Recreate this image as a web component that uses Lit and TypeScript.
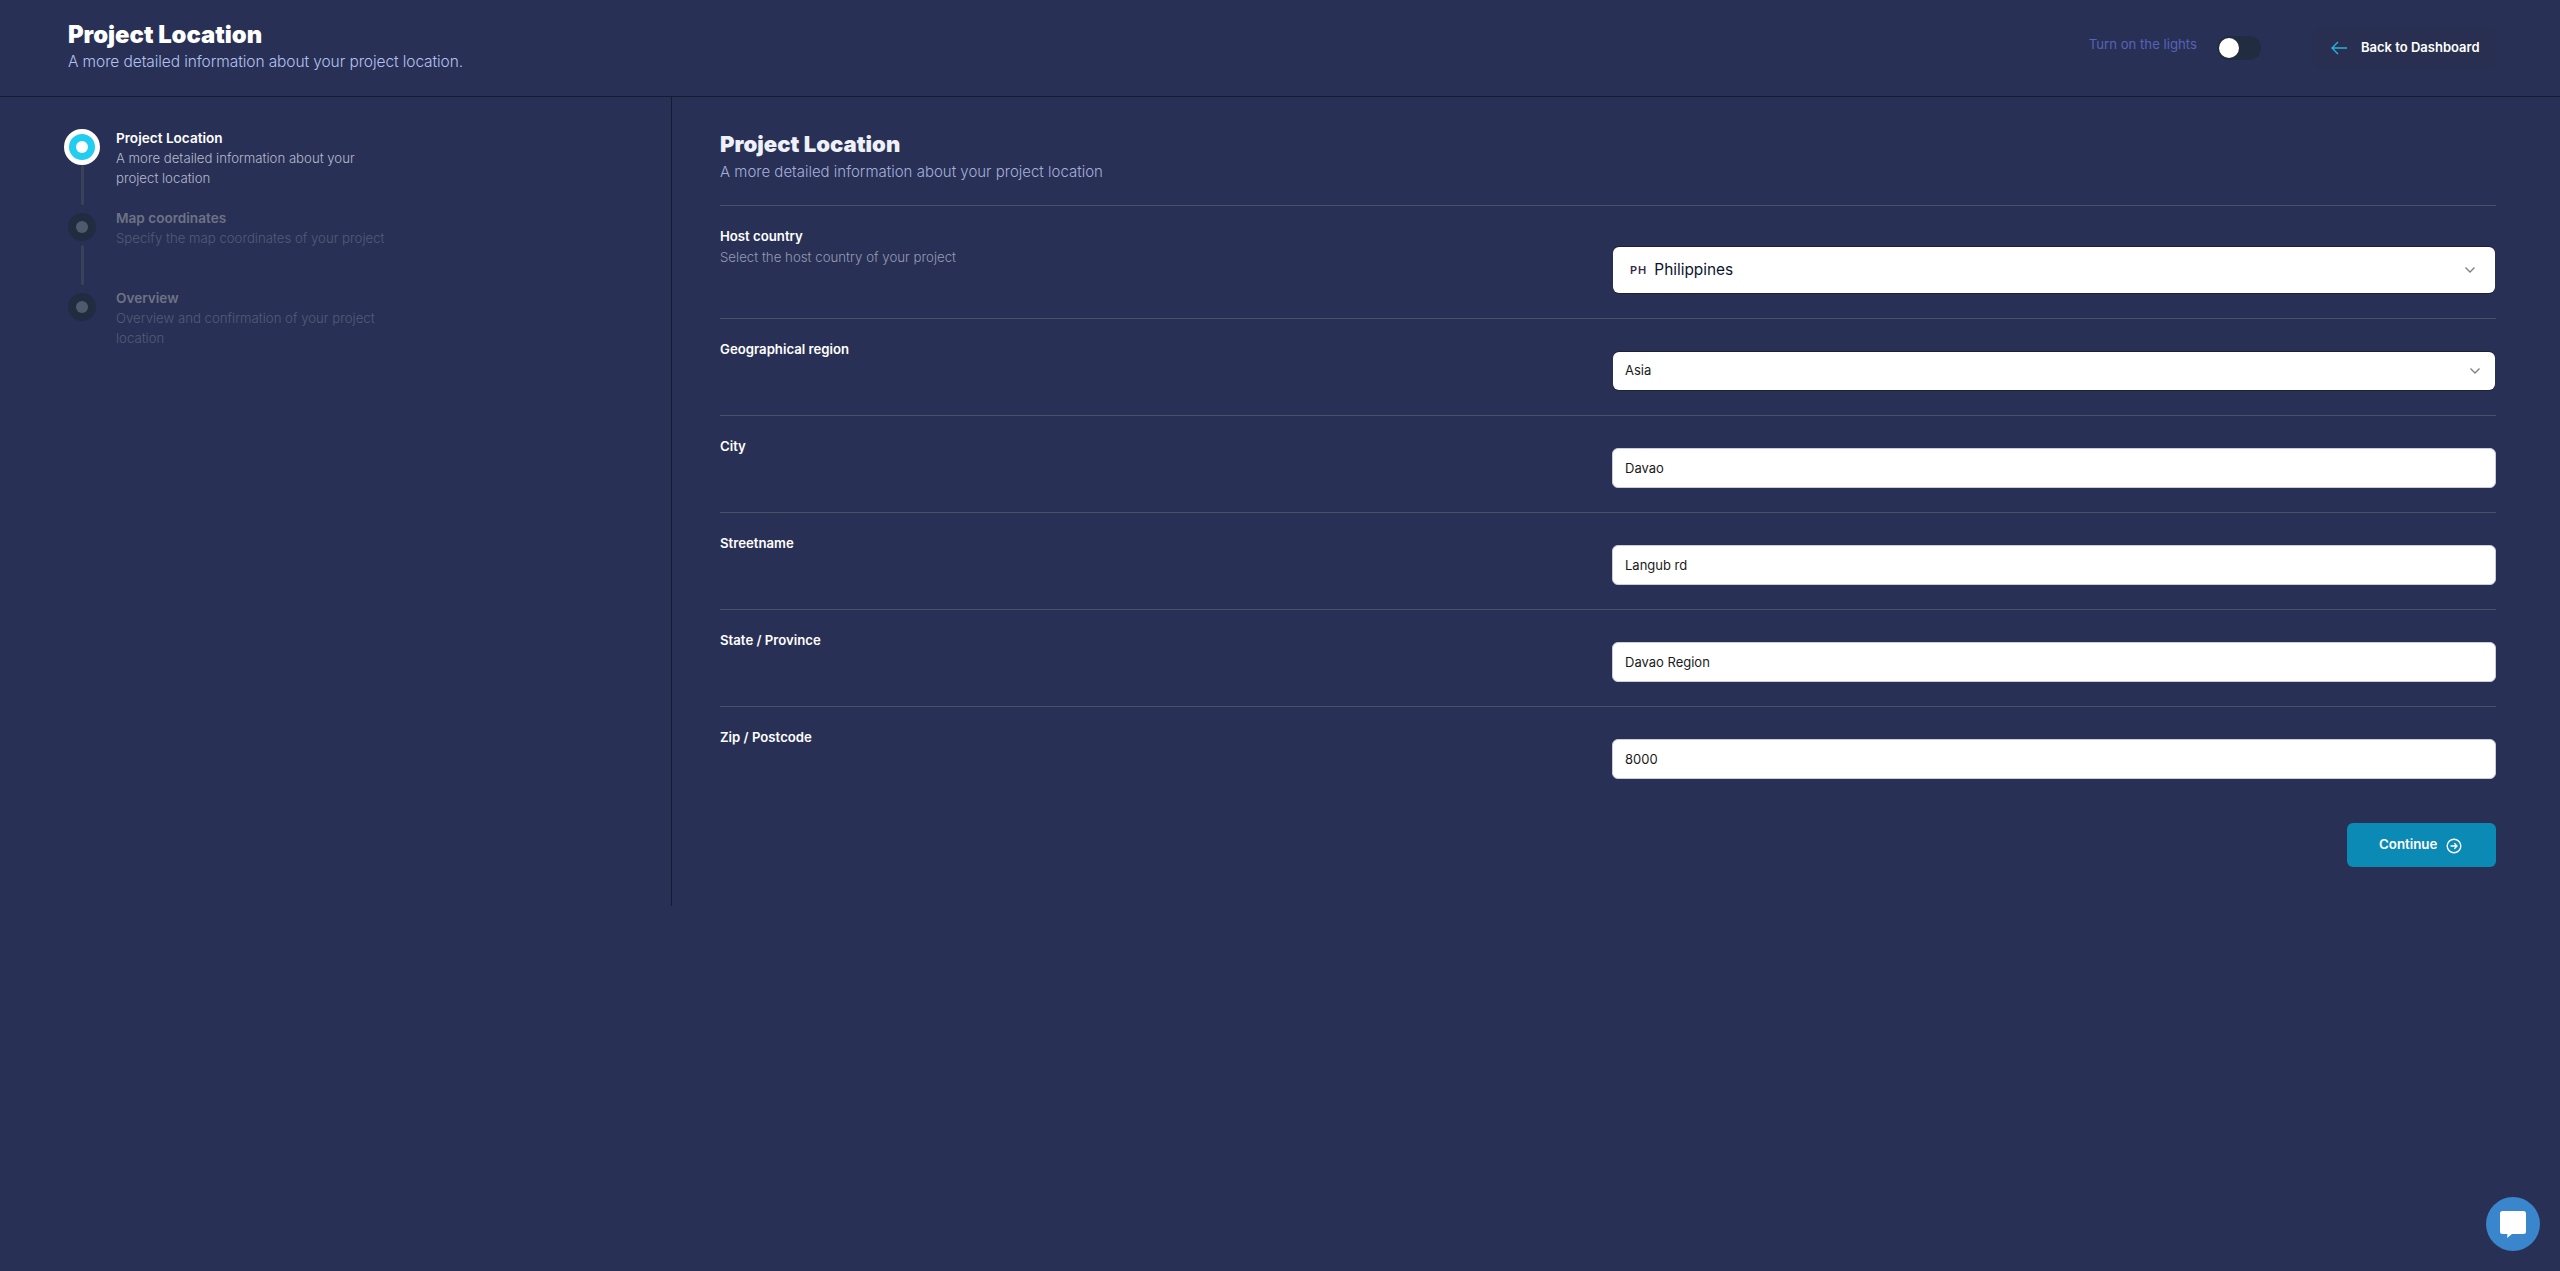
import { LitElement, html, css } from "lit";
import { customElement } from "lit/decorators.js";

const steps = [
  { t: "Project Location", d: "A more detailed information about your project location", active: true, line: true },
  { t: "Map coordinates", d: "Specify the map coordinates of your project", active: false, line: true },
  { t: "Overview", d: "Overview and confirmation of your project location", active: false, line: false },
];

const inputs = [
  { l: "City", v: "Davao" },
  { l: "Streetname", v: "Langub rd" },
  { l: "State / Province", v: "Davao Region" },
  { l: "Zip / Postcode", v: "8000" },
];

const chevron = html`<svg class="chev" width="12" height="8" viewBox="0 0 12 8" fill="none"><path d="M1.5 1.5 6 6l4.500-4.500" stroke="#7d7d85" stroke-width="1.3"/></svg>`;

@customElement("app-root")
export class AppRoot extends LitElement {
  static styles = css`
    :host { display: block; min-height: 100vh; background: #293055; font-family: Inter, "Liberation Sans", sans-serif; color: #fff; }
    * { box-sizing: border-box; }
    .header { height: 97px; border-bottom: 1px solid #161b33; display: flex; align-items: flex-start; justify-content: space-between; padding: 0 64px 0 68px; }
    .head-title { font-size: 23.8px; font-weight: 900; line-height: 28px; margin-top: 21px; }
    .head-sub { font-size: 15.5px; line-height: 20px; color: #b4c1f0; margin-top: 3px; font-weight: 300; letter-spacing: -0.09px; }
    .head-right { display: flex; align-items: center; margin-top: 28px; height: 40px; }
    .lights { font-size: 13.2px; font-weight: 400; color: #5564b5; margin-right: 20px; position: relative; top: -4px; }
    .toggle { width: 44px; height: 24px; border-radius: 12px; background: #212c41; padding: 2px; margin-right: 52px; }
    .knob { width: 20px; height: 20px; border-radius: 50%; background: #fff; }
    .back { width: 183px; height: 40px; border-radius: 8px; background: #282f50; display: flex; align-items: center; padding-left: 18px; gap: 14px; font-size: 13px; font-weight: 600; color: #fff; }
    .back span { position: relative; top: -1px; }
    .body { display: grid; grid-template-columns: 672px 1fr; }
    .side { border-right: 1px solid #161b33; padding: 31px 0 0 64px; }
    .step { display: flex; height: 80px; }
    .track { width: 36px; display: flex; flex-direction: column; align-items: center; margin-right: 16px; }
    .iconbox { height: 38px; display: flex; align-items: center; justify-content: center; flex: none; }
    .dot { width: 28px; height: 28px; border-radius: 50%; background: #212c41; display: flex; align-items: center; justify-content: center; }
    .dot i { display: block; width: 12px; height: 12px; border-radius: 50%; background: #515a6d; }
    .dot.on { width: 36px; height: 36px; background: #22cdf0; border: 5px solid #fff; }
    .dot.on i { background: #fff; }
    .vline { width: 3px; height: 40px; margin-top: -1px; background: #394257; border-radius: 2px; flex: none; }
    .step-text { width: 280px; }
    .step-t { font-size: 13.6px; line-height: 20px; font-weight: 600; color: #6d7385; }
    .step-d { font-size: 13.2px; line-height: 20px; font-weight: 300; color: #535c76; }
    .step.active .step-t { color: #fff; }
    .step.active .step-d { color: #b4bace; }
    .main { padding: 31px 64px 39px 48px; }
    .m-title { font-size: 22.1px; font-weight: 900; line-height: 30px; color: #eef0fa; position: relative; top: 1px; }
    .m-sub { font-size: 15px; font-weight: 300; line-height: 20px; color: #a4afdc; margin-top: 4px; padding-bottom: 23px; }
    .row { display: grid; grid-template-columns: 1fr 884px; border-top: 1px solid #4a5168; padding: 20px 0 25px; }
    .row.field { padding-bottom: 24px; }
    .label { font-size: 13.2px; line-height: 20px; font-weight: 600; color: #fff; }
    .hint { font-size: 13.25px; line-height: 20px; font-weight: 300; color: #949cb2; margin-top: 1px; }
    .sel { background: #fff; border-radius: 6px; display: flex; align-items: center; justify-content: space-between; color: #0a1430; box-shadow: 0 -1px 0 #1c2136, 0 1px 0 #1c2136; margin-left: 1px; margin-right: 1px; }
    .sel-lg { height: 46px; margin-top: 21px; padding: 0 19px 0 17px; font-size: 15.4px; }
    .sel-sm { height: 38px; margin-top: 13px; padding: 0 14px 0 12px; font-size: 13px; color: #1a1a1a; }
    .sel > span { position: relative; top: -1px; }
    .flag { font-size: 11px; font-weight: 600; letter-spacing: 1px; margin-right: 7px; color: #3a2a4a; position: relative; top: 1px; }
    .sel-v { display: flex; align-items: center; }
    input { display: block; width: 100%; height: 40px; margin: 12px 0 0; border: 1px solid #c9cde0; border-radius: 6px; background: #fff; padding: 0 12px; font: 400 13px Inter, "Liberation Sans", sans-serif; color: #1a1a1a; outline: none; }
    .actions { display: flex; justify-content: flex-end; margin-top: 20px; }
    .continue { width: 149px; height: 44px; border-radius: 6px; background: #0b8ab5; display: flex; align-items: center; padding-left: 32px; gap: 9px; font-size: 13.3px; font-weight: 600; color: #fff; }
    .continue span { position: relative; top: -1px; }
    .continue svg { position: relative; top: 1px; }
    .chat { position: fixed; left: 2486px; top: 1197px; width: 54px; height: 54px; border-radius: 50%; background: #3a86cc; display: flex; align-items: center; justify-content: center; }
  `;

  render() {
    return html`
      <div class="header">
        <div>
          <div class="head-title">Project Location</div>
          <div class="head-sub">A more detailed information about your project location.</div>
        </div>
        <div class="head-right">
          <span class="lights">Turn on the lights</span>
          <div class="toggle"><div class="knob"></div></div>
          <div class="back">
            <svg width="16" height="14" viewBox="0 0 16 14" fill="none"><path d="M16 7H1.2M7 1 1 7l6 6" stroke="#27b2dc" stroke-width="1.4"/></svg>
            <span>Back to Dashboard</span>
          </div>
        </div>
      </div>
      <div class="body">
        <div class="side">
          ${steps.map(
            (s) => html`
              <div class="step ${s.active ? "active" : ""}">
                <div class="track">
                  <div class="iconbox"><div class="dot ${s.active ? "on" : ""}"><i></i></div></div>
                  ${s.line ? html`<div class="vline"></div>` : ""}
                </div>
                <div class="step-text">
                  <div class="step-t">${s.t}</div>
                  <div class="step-d">${s.d}</div>
                </div>
              </div>
            `
          )}
        </div>
        <div class="main">
          <div class="m-title">Project Location</div>
          <div class="m-sub">A more detailed information about your project location</div>
          <div class="row">
            <div>
              <div class="label">Host country</div>
              <div class="hint">Select the host country of your project</div>
            </div>
            <div class="sel sel-lg">
              <span class="sel-v"><span class="flag">PH</span>Philippines</span>${chevron}
            </div>
          </div>
          <div class="row">
            <div class="label">Geographical region</div>
            <div class="sel sel-sm"><span>Asia</span>${chevron}</div>
          </div>
          ${inputs.map(
            (f) => html`
              <div class="row field">
                <div class="label">${f.l}</div>
                <div><input .value=${f.v} /></div>
              </div>
            `
          )}
          <div class="actions">
            <div class="continue">
              <span>Continue</span>
              <svg width="16" height="16" viewBox="0 0 16 16" fill="none" stroke="#fff" stroke-width="1.4"><circle cx="8" cy="8" r="6.800"/><path d="M4.500 8h6.500M8.300 5.200 11 8l-2.700 2.800"/></svg>
            </div>
          </div>
        </div>
      </div>
      <div class="chat">
        <svg width="28" height="28" viewBox="0 0 28 28"><path d="M3.500 1h21A2.500 2.500 0 0 1 27 3.500v18a2.500 2.500 0 0 1-2.500 2.500H13l-5 4 .5-4H3.500A2.500 2.500 0 0 1 1 21.500v-18A2.500 2.500 0 0 1 3.500 1z" fill="#fff"/></svg>
      </div>
    `;
  }
}
